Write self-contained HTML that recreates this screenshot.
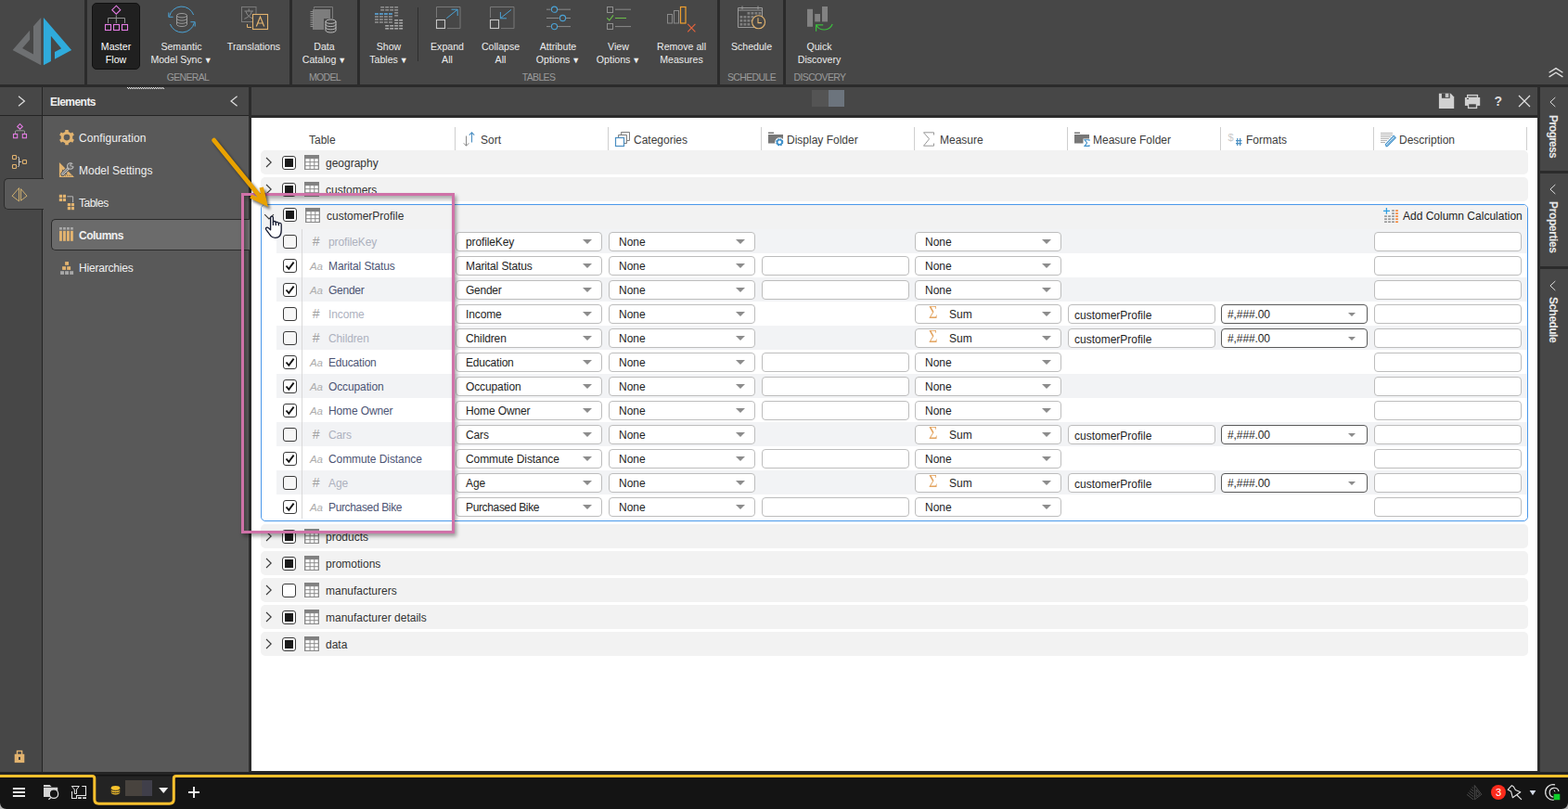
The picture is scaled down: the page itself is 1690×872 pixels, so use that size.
<!DOCTYPE html>
<html><head><meta charset="utf-8"><title>Columns</title>
<style>
*{box-sizing:border-box}
html,body{margin:0;padding:0}
body{width:1690px;height:872px;position:relative;overflow:hidden;background:#474747;font-family:"Liberation Sans",sans-serif;font-size:12px;color:#e6e6e6}
.a{position:absolute}
.d{position:absolute;background:#2b2b2b}
.rb{position:absolute;top:43px;text-align:center;font-size:10.6px;line-height:14px;color:#ededed;white-space:nowrap;transform:translateX(-50%)}
.gl{position:absolute;top:76px;font-size:10.5px;line-height:14px;color:#9b9b9b;white-space:nowrap;transform:translateX(-50%);letter-spacing:-0.65px}
.mi{position:absolute;left:85px;font-size:12px;line-height:16px;color:#f0f0f0;white-space:nowrap}
.row{position:absolute;left:281px;width:1366px;height:26px;background:#f2f2f2;border-radius:5px}
.rt{position:absolute;left:351px;font-size:12px;line-height:16px;color:#333;white-space:nowrap}
.cb{position:absolute;width:15px;height:15px;border:1px solid #3a3a3a;border-radius:3px;background:#fff}
.cb i{position:absolute;left:2px;top:2px;width:9px;height:9px;background:#1a1a1a}
.hd{position:absolute;top:143px;font-size:12px;line-height:16px;color:#3c3c3c;white-space:nowrap}
.hl{position:absolute;top:137px;width:1px;height:25px;background:#cfcfcf}
.dd{position:absolute;width:158px;height:21px;border:1px solid #bdbdbd;border-radius:4px;background:#fff;font-size:12px;line-height:20px;color:#1e1e1e;padding-left:10px;white-space:nowrap}
.dd:after{content:"";position:absolute;right:10.5px;top:7px;border-left:5px solid transparent;border-right:5px solid transparent;border-top:5px solid #8c8c8c}
.dd.fm:after{right:12px;top:8px;border-left-width:4px;border-right-width:4px;border-top-width:4px}
.tx{position:absolute;width:159px;height:21px;border:1px solid #bdbdbd;border-radius:4px;background:#fff;font-size:12px;line-height:22px;color:#1e1e1e;padding-left:6px;white-space:nowrap}
.sr{position:absolute;left:298px;width:1348px;height:26px}
.sn{position:absolute;left:354px;font-size:12px;line-height:16px;white-space:nowrap}
.ty{position:absolute;font-size:11px;line-height:16px;color:#a9a9a9;white-space:nowrap}
.vt{position:absolute;left:1658.5px;width:29px;font-weight:bold;font-size:12px;color:#e8e8e8;writing-mode:vertical-rl;white-space:nowrap;line-height:29px;letter-spacing:-0.7px}
</style></head><body>

<div class="a" style="left:0;top:0;width:1690px;height:91px;background:#474747"></div>
<div class="d" style="left:91px;top:0;width:3px;height:92px"></div>
<div class="d" style="left:312px;top:0;width:3px;height:92px"></div>
<div class="d" style="left:385px;top:0;width:3px;height:92px"></div>
<div class="d" style="left:773px;top:0;width:3px;height:92px"></div>
<div class="d" style="left:844px;top:0;width:3px;height:92px"></div>
<div class="d" style="left:0;top:91px;width:1690px;height:3px"></div>
<svg class="a" style="left:0;top:0" width="91" height="91" viewBox="0 0 91 91">
<polygon points="44.2,19 36,28.3 36,58.4 24.1,51.9 32.1,42.7 32.1,32.8 13.6,53.9 44.2,70.2" fill="#6e7072"/>
<polygon points="46.9,19 77.1,53.9 59,63.7 59,55.9 66.1,52.2 54.9,38.8 54.9,65.9 46.9,70.2" fill="#2fabdc"/>
</svg>
<div class="a" style="left:99px;top:3px;width:52px;height:72px;background:#202020;border:1px solid #111;border-radius:5px"></div>
<div class="rb" style="left:125px;color:#ffffff">Master<br>Flow</div>
<div class="rb" style="left:195.5px;color:#ededed">Semantic<br>Model Sync <span style="font-size:9px;position:relative;top:-0.5px;margin-left:-1px">&#9660;</span></div>
<div class="rb" style="left:273.5px;color:#ededed">Translations</div>
<div class="rb" style="left:349.5px;color:#ededed">Data<br>Catalog <span style="font-size:9px;position:relative;top:-0.5px;margin-left:-1px">&#9660;</span></div>
<div class="rb" style="left:419px;color:#ededed">Show<br>Tables <span style="font-size:9px;position:relative;top:-0.5px;margin-left:-1px">&#9660;</span></div>
<div class="rb" style="left:482px;color:#ededed">Expand<br>All</div>
<div class="rb" style="left:539.5px;color:#ededed">Collapse<br>All</div>
<div class="rb" style="left:601.5px;color:#ededed">Attribute<br>Options <span style="font-size:9px;position:relative;top:-0.5px;margin-left:-1px">&#9660;</span></div>
<div class="rb" style="left:666.5px;color:#ededed">View<br>Options <span style="font-size:9px;position:relative;top:-0.5px;margin-left:-1px">&#9660;</span></div>
<div class="rb" style="left:734.5px;color:#ededed">Remove all<br>Measures</div>
<div class="rb" style="left:810px;color:#ededed">Schedule</div>
<div class="rb" style="left:883px;color:#ededed">Quick<br>Discovery</div>
<div class="gl" style="left:202.5px">GENERAL</div>
<div class="gl" style="left:350px">MODEL</div>
<div class="gl" style="left:580.5px">TABLES</div>
<div class="gl" style="left:810px">SCHEDULE</div>
<div class="gl" style="left:883.5px">DISCOVERY</div>
<div class="a" style="left:450px;top:8px;width:1px;height:58px;background:#2e2e2e"></div>
<svg class="a" style="left:110px;top:4px" width="32" height="32" viewBox="0 0 32 32"><path d="M15.3 2.2 L19.8 6.7 L15.3 11.2 L10.8 6.7 Z" fill="none" stroke="#e27be2" stroke-width="1.1"/>
<path d="M15.3 12.4 V21 M6.5 21 V15.5 H24.5 V21" fill="none" stroke="#8f8f8f" stroke-width="1"/>
<rect x="3.5" y="22.5" width="6" height="6" fill="none" stroke="#e27be2" stroke-width="1.1"/>
<rect x="12.5" y="22.5" width="6" height="6" fill="none" stroke="#e27be2" stroke-width="1.1"/>
<rect x="21.5" y="22.5" width="6" height="6" fill="none" stroke="#e27be2" stroke-width="1.1"/></svg>
<svg class="a" style="left:180px;top:6px" width="32" height="30" viewBox="0 0 32 30"><g transform="translate(10,8)"><g fill="none" stroke="#9a9a9a" stroke-width="1"><ellipse cx="6" cy="2.7" rx="5.5" ry="2.2"/><path d="M0.5 2.7 V12.3 A5.5 2.2 0 0 0 11.5 12.3 V2.7"/><path d="M0.5 5.9 A5.5 2.2 0 0 0 11.5 5.9 M0.5 9.1 A5.5 2.2 0 0 0 11.5 9.1"/></g></g>
<path d="M2.6 11.5 A13.6 13.6 0 0 1 28.6 10" fill="none" stroke="#4ba3d6" stroke-width="1"/>
<path d="M29.4 18.5 A13.6 13.6 0 0 1 3.4 20" fill="none" stroke="#4ba3d6" stroke-width="1"/>
<path d="M1.8 7.5 V12.3 H6.6" fill="none" stroke="#4ba3d6" stroke-width="1"/>
<path d="M30.2 22.5 V17.7 H25.4" fill="none" stroke="#4ba3d6" stroke-width="1"/></svg>
<svg class="a" style="left:259px;top:6px" width="32" height="28" viewBox="0 0 32 28"><rect x="1.5" y="1.5" width="15.5" height="16" fill="none" stroke="#7b7b7b" stroke-width="1"/>
<path d="M4.5 6 H14 M9.2 3.3 V6 M12.4 6.2 C11.5 10.5 8 13 4.3 14.3 M6 6.2 C7 10.5 10.5 13 14.2 14.3" fill="none" stroke="#8a8a8a" stroke-width="1"/>
<path d="M7.5 20 V23.5 H12" fill="none" stroke="#e2b36f" stroke-width="1"/>
<rect x="13.5" y="9.5" width="16" height="16" fill="#474747" stroke="#e2b36f" stroke-width="1.1"/>
<path d="M17.3 22.5 L21.5 12 L25.7 22.5 M18.8 19 H24.2" fill="none" stroke="#e2b36f" stroke-width="1.2"/></svg>
<svg class="a" style="left:334px;top:6px" width="32" height="30" viewBox="0 0 32 30"><path d="M4.5 3.5 V1.5 H24.5 V17" fill="none" stroke="#7b7b7b" stroke-width="1"/>
<rect x="3" y="4" width="19" height="22" fill="#7d7d7d"/>
<path d="M0.5 6.5 H4 M0.5 8.5 H4 M0.5 10.5 H4 M0.5 12.5 H4 M0.5 14.5 H4 M0.5 16.5 H4 M0.5 18.5 H4 M0.5 20.5 H4 M0.5 22.5 H4" stroke="#8f8f8f" stroke-width="1" fill="none"/>
<rect x="15" y="14" width="15" height="16" fill="#474747"/>
<g transform="translate(16.5,14.5)"><g fill="none" stroke="#c2c2c2" stroke-width="1"><ellipse cx="6" cy="2.7" rx="5.5" ry="2.2"/><path d="M0.5 2.7 V12.3 A5.5 2.2 0 0 0 11.5 12.3 V2.7"/><path d="M0.5 5.9 A5.5 2.2 0 0 0 11.5 5.9 M0.5 9.1 A5.5 2.2 0 0 0 11.5 9.1"/></g></g></svg>
<svg class="a" style="left:404px;top:6px" width="32" height="28" viewBox="0 0 32 28"><rect x="6.2" y="1.0" width="3.9" height="1.6" fill="#8d8d8d"/><rect x="6.2" y="4.0" width="3.9" height="1.6" fill="#8d8d8d"/><rect x="11.2" y="1.0" width="3.9" height="1.6" fill="#8d8d8d"/><rect x="11.2" y="4.0" width="3.9" height="1.6" fill="#8d8d8d"/><rect x="16.2" y="1.0" width="3.9" height="1.6" fill="#8d8d8d"/><rect x="16.2" y="4.0" width="3.9" height="1.6" fill="#8d8d8d"/><rect x="21.2" y="1.0" width="3.9" height="1.6" fill="#8d8d8d"/><rect x="21.2" y="4.0" width="3.9" height="1.6" fill="#8d8d8d"/><rect x="21.2" y="7.0" width="3.9" height="1.6" fill="#8d8d8d"/><rect x="21.2" y="10.0" width="3.9" height="1.6" fill="#8d8d8d"/><rect x="0.0" y="11.2" width="3.9" height="1.6" fill="#8d8d8d"/><rect x="0.0" y="14.2" width="3.9" height="1.6" fill="#8d8d8d"/><rect x="0.0" y="17.2" width="3.9" height="1.6" fill="#8d8d8d"/><rect x="5.0" y="11.2" width="3.9" height="1.6" fill="#8d8d8d"/><rect x="5.0" y="14.2" width="3.9" height="1.6" fill="#8d8d8d"/><rect x="5.0" y="17.2" width="3.9" height="1.6" fill="#8d8d8d"/><rect x="10.0" y="11.2" width="3.9" height="1.6" fill="#8d8d8d"/><rect x="10.0" y="14.2" width="3.9" height="1.6" fill="#8d8d8d"/><rect x="10.0" y="17.2" width="3.9" height="1.6" fill="#8d8d8d"/><rect x="15.0" y="11.2" width="3.9" height="1.6" fill="#8d8d8d"/><rect x="15.0" y="14.2" width="3.9" height="1.6" fill="#8d8d8d"/><rect x="15.0" y="17.2" width="3.9" height="1.6" fill="#8d8d8d"/><rect x="0.0" y="8.2" width="3.9" height="1.6" fill="#5aa7dc"/><rect x="5.0" y="8.2" width="3.9" height="1.6" fill="#5aa7dc"/><rect x="10.0" y="8.2" width="3.9" height="1.6" fill="#5aa7dc"/><rect x="15.0" y="8.2" width="3.9" height="1.6" fill="#5aa7dc"/><rect x="21.2" y="15.0" width="3.9" height="1.6" fill="#a6a6a6"/><rect x="21.2" y="18.0" width="3.9" height="1.6" fill="#a6a6a6"/><rect x="26.2" y="15.0" width="3.9" height="1.6" fill="#a6a6a6"/><rect x="26.2" y="18.0" width="3.9" height="1.6" fill="#a6a6a6"/><rect x="11.2" y="21.0" width="3.9" height="1.6" fill="#a6a6a6"/><rect x="11.2" y="24.0" width="3.9" height="1.6" fill="#a6a6a6"/><rect x="16.2" y="21.0" width="3.9" height="1.6" fill="#a6a6a6"/><rect x="16.2" y="24.0" width="3.9" height="1.6" fill="#a6a6a6"/><rect x="21.2" y="21.0" width="3.9" height="1.6" fill="#a6a6a6"/><rect x="21.2" y="24.0" width="3.9" height="1.6" fill="#a6a6a6"/><rect x="26.2" y="21.0" width="3.9" height="1.6" fill="#a6a6a6"/><rect x="26.2" y="24.0" width="3.9" height="1.6" fill="#a6a6a6"/></svg>
<svg class="a" style="left:469px;top:6px" width="30" height="28" viewBox="0 0 30 28"><path d="M1.5 13 V1.5 H27 V24.6 H13" fill="none" stroke="#787878" stroke-width="1"/>
<rect x="1.5" y="15.5" width="9" height="9" fill="none" stroke="#c6c6c6" stroke-width="1.1"/>
<path d="M12.3 13.7 L24 4.4 M17.5 4.2 H24.2 V11" fill="none" stroke="#4ba3d6" stroke-width="1"/></svg>
<svg class="a" style="left:527px;top:6px" width="30" height="28" viewBox="0 0 30 28"><path d="M1.5 13 V1.5 H27 V24.6 H13" fill="none" stroke="#787878" stroke-width="1"/>
<rect x="1.5" y="15.5" width="9" height="9" fill="none" stroke="#c6c6c6" stroke-width="1.1"/>
<path d="M24 4.4 L12.6 13.6 M12.4 7 V13.8 H19" fill="none" stroke="#4ba3d6" stroke-width="1"/></svg>
<svg class="a" style="left:588px;top:5px" width="30" height="30" viewBox="0 0 30 30"><path d="M1 5.2 H5.5 M13 5.2 H27 M1 14.5 H14.5 M22 14.5 H27 M1 23.6 H5.5 M13 23.6 H27" stroke="#8a8a8a" stroke-width="1" fill="none"/>
<circle cx="9.5" cy="5.2" r="3.1" fill="none" stroke="#4ba3d6" stroke-width="1.1"/>
<circle cx="18.5" cy="14.5" r="3.1" fill="none" stroke="#4ba3d6" stroke-width="1.1"/>
<circle cx="9.5" cy="23.6" r="3.1" fill="none" stroke="#4ba3d6" stroke-width="1.1"/></svg>
<svg class="a" style="left:653px;top:5px" width="30" height="30" viewBox="0 0 30 30"><rect x="1.5" y="2.5" width="6" height="6" fill="none" stroke="#8f8f8f" stroke-width="1"/>
<rect x="1.5" y="20.5" width="6" height="6" fill="none" stroke="#8f8f8f" stroke-width="1"/>
<path d="M10 5.2 H27 M10 23.6 H27" stroke="#8a8a8a" stroke-width="1" fill="none"/>
<path d="M1.2 14.3 L3.8 17 L8 11.3 M10 14.5 H22" stroke="#6cc04a" stroke-width="1.1" fill="none"/></svg>
<svg class="a" style="left:718px;top:5px" width="34" height="32" viewBox="0 0 34 32"><rect x="1.5" y="10.5" width="5" height="9.5" fill="none" stroke="#8a8a8a" stroke-width="1"/>
<rect x="8.5" y="6.5" width="5" height="13.5" fill="none" stroke="#8a8a8a" stroke-width="1"/>
<rect x="15.5" y="2.5" width="5.5" height="17.5" fill="none" stroke="#f0a030" stroke-width="1.2"/>
<path d="M23.2 20.9 L31.4 29.3 M31.4 20.9 L23.2 29.3" stroke="#e8643c" stroke-width="1.1" fill="none"/></svg>
<svg class="a" style="left:794px;top:5px" width="34" height="30" viewBox="0 0 34 30"><path d="M1.5 3.5 H27.5 V24.5 H1.5 Z M1.5 6 H27.5 M6 1.5 V5 M23 1.5 V5" fill="none" stroke="#9a9a9a" stroke-width="1"/><rect x="11.5" y="8" width="2.8" height="2.6" fill="#7f7f7f"/><rect x="15.5" y="8" width="2.8" height="2.6" fill="#7f7f7f"/><rect x="19.5" y="8" width="2.8" height="2.6" fill="#7f7f7f"/><rect x="23.5" y="8" width="2.8" height="2.6" fill="#7f7f7f"/><rect x="3.5" y="12" width="2.8" height="2.6" fill="#7f7f7f"/><rect x="7.5" y="12" width="2.8" height="2.6" fill="#7f7f7f"/><rect x="11.5" y="12" width="2.8" height="2.6" fill="#7f7f7f"/><rect x="15.5" y="12" width="2.8" height="2.6" fill="#7f7f7f"/><rect x="19.5" y="12" width="2.8" height="2.6" fill="#7f7f7f"/><rect x="3.5" y="16" width="2.8" height="2.6" fill="#7f7f7f"/><rect x="7.5" y="16" width="2.8" height="2.6" fill="#7f7f7f"/><rect x="11.5" y="16" width="2.8" height="2.6" fill="#7f7f7f"/><rect x="15.5" y="16" width="2.8" height="2.6" fill="#7f7f7f"/><rect x="3.5" y="20" width="2.8" height="2.6" fill="#7f7f7f"/><rect x="7.5" y="20" width="2.8" height="2.6" fill="#7f7f7f"/><rect x="11.5" y="20" width="2.8" height="2.6" fill="#7f7f7f"/>
<circle cx="23.6" cy="18.8" r="7" fill="#474747" stroke="#e2b36f" stroke-width="1.1"/>
<path d="M23 14.2 V19.6 H27" fill="none" stroke="#e2b36f" stroke-width="1.1"/></svg>
<svg class="a" style="left:869px;top:5px" width="32" height="32" viewBox="0 0 32 32"><rect x="1" y="4.8" width="6" height="19" fill="#828282"/><rect x="9.2" y="10" width="5.8" height="8.4" fill="#828282"/><rect x="17" y="2" width="6" height="16.4" fill="#828282"/>
<path d="M28.2 21 C25 28.6 15 29 10.8 22.2 M10.6 28.8 V21.9 H18.2" fill="none" stroke="#3cbe3e" stroke-width="1.2"/></svg>
<svg class="a" style="left:1667.6px;top:71.7px" width="18" height="14" viewBox="0 0 18 14"><path d="M1.6 6.3 L9 1.6 L16.4 6.3 M1.6 10.9 L9 6.2 L16.4 10.9" fill="none" stroke="#e0e0e0" stroke-width="1.3"/></svg>
<div class="a" style="left:0;top:94px;width:1690px;height:30px;background:#474747"></div>
<div class="d" style="left:0;top:124px;width:271px;height:1px;background:#242424"></div>
<div class="d" style="left:268px;top:94px;width:3px;height:740px"></div>
<div class="d" style="left:268px;top:124px;width:1392px;height:3px"></div>
<div class="d" style="left:1657px;top:94px;width:3px;height:740px"></div>
<div class="d" style="left:45px;top:94px;width:1px;height:740px;background:#242424"></div>
<div class="a" style="left:137px;top:94px;width:39px;height:1px;background:repeating-linear-gradient(90deg,#f0f0f0 0 1px,#474747 1px 2px)"></div>
<div class="a" style="left:138px;top:95px;width:39px;height:1px;background:repeating-linear-gradient(90deg,#f0f0f0 0 1px,#474747 1px 2px)"></div>
<svg class="a" style="left:17px;top:101px" width="12" height="16" viewBox="0 0 12 16"><path d="M3 2.7 L9.4 8 L3 13.3" fill="none" stroke="#e0e0e0" stroke-width="1.2"/></svg>
<div class="a" style="left:54px;top:102px;font-weight:bold;font-size:12px;line-height:16px;color:#f0f0f0;letter-spacing:-0.55px">Elements</div>
<svg class="a" style="left:246px;top:101px" width="12" height="16" viewBox="0 0 12 16"><path d="M9.6 2.7 L3 8 L9.6 13.3" fill="none" stroke="#e0e0e0" stroke-width="1.2"/></svg>
<div class="a" style="left:875px;top:97px;width:18px;height:18px;background:#545454"></div>
<div class="a" style="left:893px;top:97px;width:17px;height:18px;background:#6c747d"></div>
<svg class="a" style="left:1550px;top:100px" width="18" height="18" viewBox="0 0 18 18"><path d="M0.9 0.8 H13.6 L17.2 4.5 V17.1 H0.9 Z" fill="#d1d1d1"/><rect x="3.9" y="0.8" width="8.8" height="5" fill="#474747"/><rect x="7.8" y="0.8" width="3.5" height="4.1" fill="#d1d1d1"/><rect x="9.3" y="1.2" width="0.5" height="3.4" fill="#9a9a9a"/></svg>
<svg class="a" style="left:1578px;top:101px" width="18" height="17" viewBox="0 0 18 17"><rect x="0.9" y="4" width="16.3" height="8.9" fill="#d1d1d1"/><rect x="3" y="0.9" width="12.1" height="3.4" fill="#d1d1d1"/><rect x="4.3" y="2.3" width="9.5" height="1.4" fill="#474747"/><rect x="3.9" y="10.1" width="10.3" height="6" fill="#d1d1d1"/><rect x="5.2" y="11.3" width="7.6" height="3.4" fill="#474747"/><rect x="2.9" y="4.9" width="2.1" height="1.1" fill="#474747"/></svg>
<div class="a" style="left:1610.5px;top:100px;font-weight:bold;font-size:14px;line-height:18px;color:#dcdcdc">?</div>
<svg class="a" style="left:1636px;top:102px" width="14" height="14" viewBox="0 0 14 14"><path d="M1 1 L13 13 M13 1 L1 13" stroke="#e2e2e2" stroke-width="1.2" fill="none"/></svg>
<div class="a" style="left:46px;top:125px;width:222px;height:709px;background:#595959"></div>
<div class="a" style="left:4px;top:192px;width:43px;height:34px;background:#595959;border:1px solid #2b2b2b;border-right:none;border-radius:5px 0 0 5px"></div>
<div class="a" style="left:55px;top:236px;width:214px;height:34px;background:#6b6b6b;border:1px solid #2b2b2b;border-right:none;border-radius:5px 0 0 5px"></div>
<div class="mi" style="top:140.5px;letter-spacing:0.08px;">Configuration</div>
<div class="mi" style="top:175.5px;">Model Settings</div>
<div class="mi" style="top:210.5px;letter-spacing:-0.5px;">Tables</div>
<div class="mi" style="top:245.5px;font-weight:bold;letter-spacing:-0.5px;">Columns</div>
<div class="mi" style="top:280.5px;letter-spacing:-0.2px;">Hierarchies</div>
<svg class="a" style="left:13px;top:132px" width="18" height="18" viewBox="0 0 18 18"><path d="M8.5 1.6 L11.3 4.4 L8.5 7.2 L5.7 4.4 Z" fill="none" stroke="#e27be2" stroke-width="1.1"/>
<path d="M3.5 12 V9.8 Q3.5 8.8 4.5 8.8 H12.5 Q13.5 8.8 13.5 9.8 V12" fill="none" stroke="#9a9a9a" stroke-width="1"/>
<rect x="1.5" y="12.5" width="4.2" height="4.2" fill="none" stroke="#e27be2" stroke-width="1.1"/>
<rect x="11.3" y="12.5" width="4.2" height="4.2" fill="none" stroke="#e27be2" stroke-width="1.1"/></svg>
<svg class="a" style="left:12px;top:166px" width="18" height="18" viewBox="0 0 18 18"><rect x="1.5" y="1.5" width="4" height="4" rx="0.8" fill="none" stroke="#e2b36f" stroke-width="1.1"/>
<rect x="1.5" y="11.5" width="4" height="4" rx="0.8" fill="none" stroke="#e2b36f" stroke-width="1.1"/>
<rect x="12.5" y="6.5" width="4" height="4" rx="0.8" fill="none" stroke="#e2b36f" stroke-width="1.1"/>
<path d="M7 3.4 H7.6 Q8.5 3.4 8.5 4.3 V12.6 Q8.5 13.5 7.6 13.5 H7 M8.5 8.4 H11.2" fill="none" stroke="#cfcfcf" stroke-width="1"/></svg>
<svg class="a" style="left:12px;top:201px" width="18" height="18" viewBox="0 0 18 18"><path d="M8.5 1.6 L1.1 10.2 L8.5 15.9 Z" fill="none" stroke="#d8b570" stroke-width="0.9" stroke-linejoin="round"/><path d="M10.5 2.6 L17 10.2 L10.5 15.2 Z" fill="none" stroke="#d8b570" stroke-width="0.9" stroke-linejoin="round"/></svg>
<svg class="a" style="left:15px;top:808px" width="12" height="15" viewBox="0 0 12 15"><rect x="3.5" y="1.5" width="5.1" height="6" fill="none" stroke="#e2b36f" stroke-width="1.4"/><rect x="0.7" y="4.8" width="10.6" height="9.3" fill="#e2b36f"/><rect x="5" y="7.9" width="1.9" height="3.1" fill="#3a3a3a"/></svg>
<svg class="a" style="left:63px;top:139px" width="18" height="18" viewBox="0 0 18 18"><polygon points="7.27,0.98 10.73,0.98 10.85,2.97 13.38,4.43 15.17,3.55 16.89,6.54 15.23,7.64 15.23,10.56 16.89,11.66 15.17,14.65 13.38,13.77 10.85,15.23 10.73,17.22 7.27,17.22 7.15,15.23 4.62,13.77 2.83,14.65 1.11,11.66 2.77,10.56 2.77,7.64 1.11,6.54 2.83,3.55 4.62,4.43 7.15,2.97" fill="#e2b36f"/><circle cx="9" cy="9.1" r="3.3" fill="#595959"/></svg>
<svg class="a" style="left:63px;top:174px" width="18" height="18" viewBox="0 0 18 18"><path d="M0.9 0.9 V17 H17 Z M4 8.4 V14 H9.8 Z" fill="#e2b36f" fill-rule="evenodd"/><rect x="3.4" y="14.6" width="0.8" height="1.3" fill="#595959"/><rect x="5.3" y="14.6" width="0.8" height="1.3" fill="#595959"/><rect x="7.2" y="14.6" width="0.8" height="1.3" fill="#595959"/><rect x="9.1" y="14.6" width="0.8" height="1.3" fill="#595959"/><rect x="11.0" y="14.6" width="0.8" height="1.3" fill="#595959"/><rect x="12.9" y="14.6" width="0.8" height="1.3" fill="#595959"/>
<path d="M4.4 13.6 L11.6 6.4" stroke="#595959" stroke-width="4.4" fill="none" stroke-linecap="round"/>
<path d="M4.6 13.4 L11 7" stroke="#bdbdbd" stroke-width="2.8" fill="none" stroke-linecap="round"/>
<path d="M4.8 13.2 L11 7" stroke="#666" stroke-width="1" fill="none" stroke-linecap="round"/>
<circle cx="12.8" cy="5" r="3.2" fill="#666" stroke="#bdbdbd" stroke-width="1.1"/>
<path d="M12.8 5 L17.6 0.4 L18 5.6 Z" fill="#595959"/>
<path d="M13.4 1.8 L12.8 4.8 L15.8 5.4" fill="none" stroke="#bdbdbd" stroke-width="1"/></svg>
<svg class="a" style="left:63px;top:209px" width="18" height="18" viewBox="0 0 18 18"><rect x="0.8" y="0.8" width="3.2" height="3.2" fill="#e2b36f"/><rect x="4.8" y="0.8" width="3.2" height="3.2" fill="#e2b36f"/><rect x="0.8" y="4.8" width="3.2" height="3.2" fill="#e2b36f"/><rect x="4.8" y="4.8" width="3.2" height="3.2" fill="#e2b36f"/><rect x="9.8" y="10" width="3.2" height="3.2" fill="#e2b36f"/><rect x="13.8" y="10" width="3.2" height="3.2" fill="#e2b36f"/><rect x="9.8" y="14" width="3.2" height="3.2" fill="#e2b36f"/><rect x="13.8" y="14" width="3.2" height="3.2" fill="#e2b36f"/><path d="M9.4 2.8 H15.6 V9.2" fill="none" stroke="#b5b5b5" stroke-width="1"/></svg>
<svg class="a" style="left:63px;top:244px" width="18" height="18" viewBox="0 0 18 18"><rect x="1" y="1" width="2.9" height="2.6" fill="#a9a9a9"/><rect x="1" y="4.8" width="2.9" height="11" fill="#e2b36f"/><rect x="5" y="1" width="2.9" height="2.6" fill="#a9a9a9"/><rect x="5" y="4.8" width="2.9" height="11" fill="#e2b36f"/><rect x="9" y="1" width="2.9" height="2.6" fill="#a9a9a9"/><rect x="9" y="4.8" width="2.9" height="11" fill="#e2b36f"/><rect x="13" y="1" width="2.9" height="2.6" fill="#a9a9a9"/><rect x="13" y="4.8" width="2.9" height="11" fill="#e2b36f"/></svg>
<svg class="a" style="left:63px;top:280px" width="18" height="18" viewBox="0 0 18 18"><rect x="7.1" y="2.1" width="3.9" height="3.7" fill="#e2b36f"/><rect x="4.1" y="7.2" width="3.9" height="3.7" fill="#e2b36f"/><rect x="9.2" y="7.2" width="3.9" height="3.7" fill="#e2b36f"/><rect x="2.1" y="12.2" width="3.9" height="3.7" fill="#a9a9a9"/><rect x="7.1" y="12.2" width="3.9" height="3.7" fill="#a9a9a9"/><rect x="12.2" y="12.2" width="3.9" height="3.7" fill="#a9a9a9"/></svg>
<div class="a" style="left:271px;top:127px;width:1386px;height:704px;background:#fff"></div>
<div class="d" style="left:271px;top:831px;width:1390px;height:1px"></div>
<div class="hd" style="left:333px">Table</div>
<div class="hd" style="left:518px">Sort</div>
<div class="hd" style="left:683px">Categories</div>
<div class="hd" style="left:848px">Display Folder</div>
<div class="hd" style="left:1013px">Measure</div>
<div class="hd" style="left:1178px">Measure Folder</div>
<div class="hd" style="left:1343px">Formats</div>
<div class="hd" style="left:1508px">Description</div>
<div class="hl" style="left:490px"></div>
<div class="hl" style="left:655px"></div>
<div class="hl" style="left:820px"></div>
<div class="hl" style="left:985px"></div>
<div class="hl" style="left:1150px"></div>
<div class="hl" style="left:1315px"></div>
<div class="hl" style="left:1480px"></div>
<div class="hl" style="left:1645px"></div>
<svg class="a" style="left:498px;top:140px" width="16" height="20" viewBox="0 0 16 20">
<path d="M4.5 6.5 V17 M1.8 14.3 L4.5 17.3 L7.2 14.3" fill="none" stroke="#8a8a8a" stroke-width="1"/>
<path d="M10.5 13.5 V3 M7.8 5.7 L10.5 2.7 L13.2 5.7" fill="none" stroke="#4a8ec2" stroke-width="1.1"/></svg>
<svg class="a" style="left:662px;top:141px" width="18" height="18" viewBox="0 0 18 18">
<path d="M7.5 4.5 V1.5 H16.5 V10.5 H13.5" fill="none" stroke="#7d7d7d" stroke-width="1"/>
<path d="M4.5 7.5 V4.5 H13.5 V13.5 H10.5" fill="none" stroke="#7d7d7d" stroke-width="1"/>
<rect x="1.5" y="7.5" width="9" height="9" fill="#fff" stroke="#4a8ec2" stroke-width="1.2"/></svg>
<svg class="a" style="left:828px;top:142px" width="18" height="17" viewBox="0 0 18 17"><path d="M0 0.5 H6 V2 H0 Z M0 3 H16 V12.5 H0 Z" fill="#777"/>
<circle cx="12.2" cy="11.2" r="5" fill="#fff"/>
<circle cx="12.2" cy="11.2" r="3" fill="none" stroke="#3d8fc9" stroke-width="2.2" stroke-dasharray="1.6 0.76"/>
<circle cx="12.2" cy="11.2" r="2.6" fill="none" stroke="#3d8fc9" stroke-width="1.4"/></svg>
<svg class="a" style="left:994px;top:142px" width="14" height="16" viewBox="0 0 14 16"><path d="M12.5 3.5 V0.8 H1.5 L7.5 7.8 L1.5 15.2 H12.5 V12.5" fill="none" stroke="#8c8c8c" stroke-width="0.9"/></svg>
<svg class="a" style="left:1158px;top:142px" width="18" height="17" viewBox="0 0 18 17"><path d="M0 0.5 H6 V2 H0 Z M0 3 H16 V12.5 H0 Z" fill="#777"/>
<rect x="9.5" y="7.5" width="8.5" height="9.5" fill="#fff"/>
<path d="M16 10 V8.8 H11 L13.6 12 L11 15.4 H16 V14.2" fill="none" stroke="#3d8fc9" stroke-width="1.1"/></svg>
<div class="a" style="left:1323.6px;top:140.5px;font-size:11px;line-height:14px;color:#c9c9c9">$</div>
<svg class="a" style="left:1331px;top:148px" width="9" height="10" viewBox="0 0 9 10"><path d="M2.8 1 V9 M5.6 1 V9 M1 3.6 H7.4 M1 6.6 H7.4" stroke="#4a8fc2" stroke-width="1.2" fill="none"/></svg>
<svg class="a" style="left:1488px;top:142px" width="18" height="17" viewBox="0 0 18 17">
<path d="M0 1.5 H13 M0 3.5 H13 M0 5.5 H11 M0 7.5 H9 M0 9.5 H7 M0 11.5 H5" stroke="#a0a0a0" stroke-width="0.8" fill="none"/>
<path d="M6.2 15.8 L5.4 13.6 L14.2 4.4 L16.2 6.4 L7.6 15.2 Z" fill="#fff" stroke="#3d8fc9" stroke-width="1.1"/>
<path d="M6.6 14.6 L14.8 6" stroke="#3d8fc9" stroke-width="0.8"/></svg>
<div class="row" style="top:162px"></div>
<svg class="a" style="left:284px;top:168px" width="10" height="14" viewBox="0 0 10 14"><path d="M3 2 L8.2 7 L3 12" fill="none" stroke="#3a3a3a" stroke-width="1.1"/></svg>
<div class="cb" style="left:304px;top:168px"><i></i></div>
<svg class="a" style="left:328px;top:167px" width="16" height="16" viewBox="0 0 16 16"><rect x="0" y="0" width="16" height="16" fill="#8b8b8b"/><rect x="0" y="0" width="16" height="3.4" fill="#818181"/><rect x="1.4" y="4.2" width="4.2" height="3" fill="#fff"/><rect x="1.4" y="8.2" width="4.2" height="3" fill="#fff"/><rect x="1.4" y="12.2" width="4.2" height="2.7" fill="#fff"/><rect x="6.6" y="4.2" width="3.7" height="3" fill="#fff"/><rect x="6.6" y="8.2" width="3.7" height="3" fill="#fff"/><rect x="6.6" y="12.2" width="3.7" height="2.7" fill="#fff"/><rect x="11.3" y="4.2" width="3.4" height="3" fill="#fff"/><rect x="11.3" y="8.2" width="3.4" height="3" fill="#fff"/><rect x="11.3" y="12.2" width="3.4" height="2.7" fill="#fff"/></svg>
<div class="rt" style="top:168px">geography</div>
<div class="row" style="top:191px"></div>
<svg class="a" style="left:284px;top:197px" width="10" height="14" viewBox="0 0 10 14"><path d="M3 2 L8.2 7 L3 12" fill="none" stroke="#3a3a3a" stroke-width="1.1"/></svg>
<div class="cb" style="left:304px;top:197px"><i></i></div>
<svg class="a" style="left:328px;top:196px" width="16" height="16" viewBox="0 0 16 16"><rect x="0" y="0" width="16" height="16" fill="#8b8b8b"/><rect x="0" y="0" width="16" height="3.4" fill="#818181"/><rect x="1.4" y="4.2" width="4.2" height="3" fill="#fff"/><rect x="1.4" y="8.2" width="4.2" height="3" fill="#fff"/><rect x="1.4" y="12.2" width="4.2" height="2.7" fill="#fff"/><rect x="6.6" y="4.2" width="3.7" height="3" fill="#fff"/><rect x="6.6" y="8.2" width="3.7" height="3" fill="#fff"/><rect x="6.6" y="12.2" width="3.7" height="2.7" fill="#fff"/><rect x="11.3" y="4.2" width="3.4" height="3" fill="#fff"/><rect x="11.3" y="8.2" width="3.4" height="3" fill="#fff"/><rect x="11.3" y="12.2" width="3.4" height="2.7" fill="#fff"/></svg>
<div class="rt" style="top:197px">customers</div>
<div class="row" style="top:565px"></div>
<svg class="a" style="left:284px;top:571px" width="10" height="14" viewBox="0 0 10 14"><path d="M3 2 L8.2 7 L3 12" fill="none" stroke="#3a3a3a" stroke-width="1.1"/></svg>
<div class="cb" style="left:304px;top:571px"><i></i></div>
<svg class="a" style="left:328px;top:570px" width="16" height="16" viewBox="0 0 16 16"><rect x="0" y="0" width="16" height="16" fill="#8b8b8b"/><rect x="0" y="0" width="16" height="3.4" fill="#818181"/><rect x="1.4" y="4.2" width="4.2" height="3" fill="#fff"/><rect x="1.4" y="8.2" width="4.2" height="3" fill="#fff"/><rect x="1.4" y="12.2" width="4.2" height="2.7" fill="#fff"/><rect x="6.6" y="4.2" width="3.7" height="3" fill="#fff"/><rect x="6.6" y="8.2" width="3.7" height="3" fill="#fff"/><rect x="6.6" y="12.2" width="3.7" height="2.7" fill="#fff"/><rect x="11.3" y="4.2" width="3.4" height="3" fill="#fff"/><rect x="11.3" y="8.2" width="3.4" height="3" fill="#fff"/><rect x="11.3" y="12.2" width="3.4" height="2.7" fill="#fff"/></svg>
<div class="rt" style="top:571px">products</div>
<div class="row" style="top:594px"></div>
<svg class="a" style="left:284px;top:600px" width="10" height="14" viewBox="0 0 10 14"><path d="M3 2 L8.2 7 L3 12" fill="none" stroke="#3a3a3a" stroke-width="1.1"/></svg>
<div class="cb" style="left:304px;top:600px"><i></i></div>
<svg class="a" style="left:328px;top:599px" width="16" height="16" viewBox="0 0 16 16"><rect x="0" y="0" width="16" height="16" fill="#8b8b8b"/><rect x="0" y="0" width="16" height="3.4" fill="#818181"/><rect x="1.4" y="4.2" width="4.2" height="3" fill="#fff"/><rect x="1.4" y="8.2" width="4.2" height="3" fill="#fff"/><rect x="1.4" y="12.2" width="4.2" height="2.7" fill="#fff"/><rect x="6.6" y="4.2" width="3.7" height="3" fill="#fff"/><rect x="6.6" y="8.2" width="3.7" height="3" fill="#fff"/><rect x="6.6" y="12.2" width="3.7" height="2.7" fill="#fff"/><rect x="11.3" y="4.2" width="3.4" height="3" fill="#fff"/><rect x="11.3" y="8.2" width="3.4" height="3" fill="#fff"/><rect x="11.3" y="12.2" width="3.4" height="2.7" fill="#fff"/></svg>
<div class="rt" style="top:600px">promotions</div>
<div class="row" style="top:623px"></div>
<svg class="a" style="left:284px;top:629px" width="10" height="14" viewBox="0 0 10 14"><path d="M3 2 L8.2 7 L3 12" fill="none" stroke="#3a3a3a" stroke-width="1.1"/></svg>
<div class="cb" style="left:304px;top:629px"></div>
<svg class="a" style="left:328px;top:628px" width="16" height="16" viewBox="0 0 16 16"><rect x="0" y="0" width="16" height="16" fill="#8b8b8b"/><rect x="0" y="0" width="16" height="3.4" fill="#818181"/><rect x="1.4" y="4.2" width="4.2" height="3" fill="#fff"/><rect x="1.4" y="8.2" width="4.2" height="3" fill="#fff"/><rect x="1.4" y="12.2" width="4.2" height="2.7" fill="#fff"/><rect x="6.6" y="4.2" width="3.7" height="3" fill="#fff"/><rect x="6.6" y="8.2" width="3.7" height="3" fill="#fff"/><rect x="6.6" y="12.2" width="3.7" height="2.7" fill="#fff"/><rect x="11.3" y="4.2" width="3.4" height="3" fill="#fff"/><rect x="11.3" y="8.2" width="3.4" height="3" fill="#fff"/><rect x="11.3" y="12.2" width="3.4" height="2.7" fill="#fff"/></svg>
<div class="rt" style="top:629px">manufacturers</div>
<div class="row" style="top:652px"></div>
<svg class="a" style="left:284px;top:658px" width="10" height="14" viewBox="0 0 10 14"><path d="M3 2 L8.2 7 L3 12" fill="none" stroke="#3a3a3a" stroke-width="1.1"/></svg>
<div class="cb" style="left:304px;top:658px"><i></i></div>
<svg class="a" style="left:328px;top:657px" width="16" height="16" viewBox="0 0 16 16"><rect x="0" y="0" width="16" height="16" fill="#8b8b8b"/><rect x="0" y="0" width="16" height="3.4" fill="#818181"/><rect x="1.4" y="4.2" width="4.2" height="3" fill="#fff"/><rect x="1.4" y="8.2" width="4.2" height="3" fill="#fff"/><rect x="1.4" y="12.2" width="4.2" height="2.7" fill="#fff"/><rect x="6.6" y="4.2" width="3.7" height="3" fill="#fff"/><rect x="6.6" y="8.2" width="3.7" height="3" fill="#fff"/><rect x="6.6" y="12.2" width="3.7" height="2.7" fill="#fff"/><rect x="11.3" y="4.2" width="3.4" height="3" fill="#fff"/><rect x="11.3" y="8.2" width="3.4" height="3" fill="#fff"/><rect x="11.3" y="12.2" width="3.4" height="2.7" fill="#fff"/></svg>
<div class="rt" style="top:658px">manufacturer details</div>
<div class="row" style="top:681px"></div>
<svg class="a" style="left:284px;top:687px" width="10" height="14" viewBox="0 0 10 14"><path d="M3 2 L8.2 7 L3 12" fill="none" stroke="#3a3a3a" stroke-width="1.1"/></svg>
<div class="cb" style="left:304px;top:687px"><i></i></div>
<svg class="a" style="left:328px;top:686px" width="16" height="16" viewBox="0 0 16 16"><rect x="0" y="0" width="16" height="16" fill="#8b8b8b"/><rect x="0" y="0" width="16" height="3.4" fill="#818181"/><rect x="1.4" y="4.2" width="4.2" height="3" fill="#fff"/><rect x="1.4" y="8.2" width="4.2" height="3" fill="#fff"/><rect x="1.4" y="12.2" width="4.2" height="2.7" fill="#fff"/><rect x="6.6" y="4.2" width="3.7" height="3" fill="#fff"/><rect x="6.6" y="8.2" width="3.7" height="3" fill="#fff"/><rect x="6.6" y="12.2" width="3.7" height="2.7" fill="#fff"/><rect x="11.3" y="4.2" width="3.4" height="3" fill="#fff"/><rect x="11.3" y="8.2" width="3.4" height="3" fill="#fff"/><rect x="11.3" y="12.2" width="3.4" height="2.7" fill="#fff"/></svg>
<div class="rt" style="top:687px">data</div>
<div class="a" style="left:281px;top:220px;width:1366px;height:342px;border:1px solid #4a98ea;border-radius:5px;background:#fff"></div>
<div class="a" style="left:282px;top:221px;width:1364px;height:26px;background:#f2f2f2;border-radius:4px 4px 0 0"></div>
<svg class="a" style="left:284px;top:226px" width="14" height="12" viewBox="0 0 14 12"><path d="M1.2 5.2 L6 10 L11 5.2" fill="none" stroke="#3a3a3a" stroke-width="1.1"/></svg>
<div class="cb" style="left:305px;top:224px"><i></i></div>
<svg class="a" style="left:329px;top:224px" width="16" height="16" viewBox="0 0 16 16"><rect x="0" y="0" width="16" height="16" fill="#8b8b8b"/><rect x="0" y="0" width="16" height="3.4" fill="#818181"/><rect x="1.4" y="4.2" width="4.2" height="3" fill="#fff"/><rect x="1.4" y="8.2" width="4.2" height="3" fill="#fff"/><rect x="1.4" y="12.2" width="4.2" height="2.7" fill="#fff"/><rect x="6.6" y="4.2" width="3.7" height="3" fill="#fff"/><rect x="6.6" y="8.2" width="3.7" height="3" fill="#fff"/><rect x="6.6" y="12.2" width="3.7" height="2.7" fill="#fff"/><rect x="11.3" y="4.2" width="3.4" height="3" fill="#fff"/><rect x="11.3" y="8.2" width="3.4" height="3" fill="#fff"/><rect x="11.3" y="12.2" width="3.4" height="2.7" fill="#fff"/></svg>
<div class="rt" style="left:352px;top:225px">customerProfile</div>
<div class="a" style="left:1512px;top:225px;font-size:12px;line-height:16px;color:#222;white-space:nowrap">Add Column Calculation</div>
<svg class="a" style="left:1490px;top:224px" width="18" height="18" viewBox="0 0 18 18"><rect x="2.1" y="8.36" width="2.8" height="1.5" fill="#8c8c8c"/><rect x="2.1" y="11.39" width="2.8" height="1.5" fill="#8c8c8c"/><rect x="2.1" y="14.42" width="2.8" height="1.5" fill="#8c8c8c"/><rect x="6.1" y="8.36" width="2.8" height="1.5" fill="#8c8c8c"/><rect x="6.1" y="11.39" width="2.8" height="1.5" fill="#8c8c8c"/><rect x="6.1" y="14.42" width="2.8" height="1.5" fill="#8c8c8c"/><rect x="10.1" y="2.30" width="2.8" height="1.5" fill="#8c8c8c"/><rect x="10.1" y="5.33" width="2.8" height="1.5" fill="#8c8c8c"/><rect x="10.1" y="8.36" width="2.8" height="1.5" fill="#8c8c8c"/><rect x="10.1" y="11.39" width="2.8" height="1.5" fill="#8c8c8c"/><rect x="10.1" y="14.42" width="2.8" height="1.5" fill="#8c8c8c"/><rect x="14.1" y="2.30" width="2.8" height="1.5" fill="#f87a22"/><rect x="14.1" y="5.33" width="2.8" height="1.5" fill="#f87a22"/><rect x="14.1" y="8.36" width="2.8" height="1.5" fill="#f87a22"/><rect x="14.1" y="11.39" width="2.8" height="1.5" fill="#f87a22"/><rect x="14.1" y="14.42" width="2.8" height="1.5" fill="#f87a22"/><path d="M4.4 0 V6.8 M1 3.4 H8" stroke="#2e9fe2" stroke-width="1.3" fill="none"/></svg>
<div class="sr" style="top:247px;background:#f2f3f5;height:26px"></div>
<div class="cb" style="left:305px;top:253px;background:#f6f6f6"></div>
<div class="ty" style="left:336.8px;top:251.5px;font-size:14px;color:#a2a2a2">#</div>
<div class="sn" style="top:253px;color:#adb1be;letter-spacing:-0.12px">profileKey</div>
<div class="dd" style="left:491px;top:250px;letter-spacing:-0.12px">profileKey</div>
<div class="dd" style="left:656px;top:250px">None</div>
<div class="dd" style="left:986px;top:250px">None</div>
<div class="tx" style="left:1481px;top:250px"></div>
<div class="sr" style="top:273px;background:#ffffff;height:26px"></div>
<div class="cb" style="left:305px;top:279px"><svg class="a" style="left:1px;top:1px" width="11" height="11" viewBox="0 0 11 11"><path d="M1.5 5.5 L4.3 8.8 L9.6 1.6" fill="none" stroke="#111" stroke-width="1.9"/></svg></div>
<div class="ty" style="left:334px;top:278.5px;font-style:italic;font-size:11.5px;letter-spacing:-0.2px;color:#adadad">Aa</div>
<div class="sn" style="top:279px;color:#4c5474;letter-spacing:-0.12px">Marital Status</div>
<div class="dd" style="left:491px;top:276px;letter-spacing:-0.12px">Marital Status</div>
<div class="dd" style="left:656px;top:276px">None</div>
<div class="tx" style="left:821px;top:276px"></div>
<div class="dd" style="left:986px;top:276px">None</div>
<div class="tx" style="left:1481px;top:276px"></div>
<div class="sr" style="top:299px;background:#f2f3f5;height:26px"></div>
<div class="cb" style="left:305px;top:305px"><svg class="a" style="left:1px;top:1px" width="11" height="11" viewBox="0 0 11 11"><path d="M1.5 5.5 L4.3 8.8 L9.6 1.6" fill="none" stroke="#111" stroke-width="1.9"/></svg></div>
<div class="ty" style="left:334px;top:304.5px;font-style:italic;font-size:11.5px;letter-spacing:-0.2px;color:#adadad">Aa</div>
<div class="sn" style="top:305px;color:#4c5474;letter-spacing:-0.25px">Gender</div>
<div class="dd" style="left:491px;top:302px;letter-spacing:-0.25px">Gender</div>
<div class="dd" style="left:656px;top:302px">None</div>
<div class="tx" style="left:821px;top:302px"></div>
<div class="dd" style="left:986px;top:302px">None</div>
<div class="tx" style="left:1481px;top:302px"></div>
<div class="sr" style="top:325px;background:#ffffff;height:26px"></div>
<div class="cb" style="left:305px;top:331px;background:#f6f6f6"></div>
<div class="ty" style="left:336.8px;top:329.5px;font-size:14px;color:#a2a2a2">#</div>
<div class="sn" style="top:331px;color:#adb1be;letter-spacing:-0.12px">Income</div>
<div class="dd" style="left:491px;top:328px;letter-spacing:-0.12px">Income</div>
<div class="dd" style="left:656px;top:328px">None</div>
<div class="dd" style="left:986px;top:328px;padding-left:36px"><span class="a" style="left:13.8px;top:-2.9px;color:#e3a562;font-size:18px;line-height:22px;transform:scaleX(0.9);transform-origin:0 0;font-family:'Liberation Serif',serif">&#931;</span>Sum</div>
<div class="tx" style="left:1151px;top:328px">customerProfile</div>
<div class="dd fm" style="left:1316px;top:328px;padding-left:6px;border-color:#5a5a5a;letter-spacing:-0.1px">#,###.00</div>
<div class="tx" style="left:1481px;top:328px"></div>
<div class="sr" style="top:351px;background:#f2f3f5;height:26px"></div>
<div class="cb" style="left:305px;top:357px;background:#f6f6f6"></div>
<div class="ty" style="left:336.8px;top:355.5px;font-size:14px;color:#a2a2a2">#</div>
<div class="sn" style="top:357px;color:#adb1be;letter-spacing:-0.12px">Children</div>
<div class="dd" style="left:491px;top:354px;letter-spacing:-0.12px">Children</div>
<div class="dd" style="left:656px;top:354px">None</div>
<div class="dd" style="left:986px;top:354px;padding-left:36px"><span class="a" style="left:13.8px;top:-2.9px;color:#e3a562;font-size:18px;line-height:22px;transform:scaleX(0.9);transform-origin:0 0;font-family:'Liberation Serif',serif">&#931;</span>Sum</div>
<div class="tx" style="left:1151px;top:354px">customerProfile</div>
<div class="dd fm" style="left:1316px;top:354px;padding-left:6px;border-color:#5a5a5a;letter-spacing:-0.1px">#,###.00</div>
<div class="tx" style="left:1481px;top:354px"></div>
<div class="sr" style="top:377px;background:#ffffff;height:26px"></div>
<div class="cb" style="left:305px;top:383px"><svg class="a" style="left:1px;top:1px" width="11" height="11" viewBox="0 0 11 11"><path d="M1.5 5.5 L4.3 8.8 L9.6 1.6" fill="none" stroke="#111" stroke-width="1.9"/></svg></div>
<div class="ty" style="left:334px;top:382.5px;font-style:italic;font-size:11.5px;letter-spacing:-0.2px;color:#adadad">Aa</div>
<div class="sn" style="top:383px;color:#4c5474;letter-spacing:-0.2px">Education</div>
<div class="dd" style="left:491px;top:380px;letter-spacing:-0.2px">Education</div>
<div class="dd" style="left:656px;top:380px">None</div>
<div class="tx" style="left:821px;top:380px"></div>
<div class="dd" style="left:986px;top:380px">None</div>
<div class="tx" style="left:1481px;top:380px"></div>
<div class="sr" style="top:403px;background:#f2f3f5;height:26px"></div>
<div class="cb" style="left:305px;top:409px"><svg class="a" style="left:1px;top:1px" width="11" height="11" viewBox="0 0 11 11"><path d="M1.5 5.5 L4.3 8.8 L9.6 1.6" fill="none" stroke="#111" stroke-width="1.9"/></svg></div>
<div class="ty" style="left:334px;top:408.5px;font-style:italic;font-size:11.5px;letter-spacing:-0.2px;color:#adadad">Aa</div>
<div class="sn" style="top:409px;color:#4c5474;letter-spacing:-0.12px">Occupation</div>
<div class="dd" style="left:491px;top:406px;letter-spacing:-0.12px">Occupation</div>
<div class="dd" style="left:656px;top:406px">None</div>
<div class="tx" style="left:821px;top:406px"></div>
<div class="dd" style="left:986px;top:406px">None</div>
<div class="tx" style="left:1481px;top:406px"></div>
<div class="sr" style="top:429px;background:#ffffff;height:26px"></div>
<div class="cb" style="left:305px;top:435px"><svg class="a" style="left:1px;top:1px" width="11" height="11" viewBox="0 0 11 11"><path d="M1.5 5.5 L4.3 8.8 L9.6 1.6" fill="none" stroke="#111" stroke-width="1.9"/></svg></div>
<div class="ty" style="left:334px;top:434.5px;font-style:italic;font-size:11.5px;letter-spacing:-0.2px;color:#adadad">Aa</div>
<div class="sn" style="top:435px;color:#4c5474;letter-spacing:-0.12px">Home Owner</div>
<div class="dd" style="left:491px;top:432px;letter-spacing:-0.12px">Home Owner</div>
<div class="dd" style="left:656px;top:432px">None</div>
<div class="tx" style="left:821px;top:432px"></div>
<div class="dd" style="left:986px;top:432px">None</div>
<div class="tx" style="left:1481px;top:432px"></div>
<div class="sr" style="top:455px;background:#f2f3f5;height:26px"></div>
<div class="cb" style="left:305px;top:461px;background:#f6f6f6"></div>
<div class="ty" style="left:336.8px;top:459.5px;font-size:14px;color:#a2a2a2">#</div>
<div class="sn" style="top:461px;color:#adb1be;letter-spacing:-0.12px">Cars</div>
<div class="dd" style="left:491px;top:458px;letter-spacing:-0.12px">Cars</div>
<div class="dd" style="left:656px;top:458px">None</div>
<div class="dd" style="left:986px;top:458px;padding-left:36px"><span class="a" style="left:13.8px;top:-2.9px;color:#e3a562;font-size:18px;line-height:22px;transform:scaleX(0.9);transform-origin:0 0;font-family:'Liberation Serif',serif">&#931;</span>Sum</div>
<div class="tx" style="left:1151px;top:458px">customerProfile</div>
<div class="dd fm" style="left:1316px;top:458px;padding-left:6px;border-color:#5a5a5a;letter-spacing:-0.1px">#,###.00</div>
<div class="tx" style="left:1481px;top:458px"></div>
<div class="sr" style="top:481px;background:#ffffff;height:26px"></div>
<div class="cb" style="left:305px;top:487px"><svg class="a" style="left:1px;top:1px" width="11" height="11" viewBox="0 0 11 11"><path d="M1.5 5.5 L4.3 8.8 L9.6 1.6" fill="none" stroke="#111" stroke-width="1.9"/></svg></div>
<div class="ty" style="left:334px;top:486.5px;font-style:italic;font-size:11.5px;letter-spacing:-0.2px;color:#adadad">Aa</div>
<div class="sn" style="top:487px;color:#4c5474;letter-spacing:-0.08px">Commute Distance</div>
<div class="dd" style="left:491px;top:484px;letter-spacing:-0.08px">Commute Distance</div>
<div class="dd" style="left:656px;top:484px">None</div>
<div class="tx" style="left:821px;top:484px"></div>
<div class="dd" style="left:986px;top:484px">None</div>
<div class="tx" style="left:1481px;top:484px"></div>
<div class="sr" style="top:507px;background:#f2f3f5;height:26px"></div>
<div class="cb" style="left:305px;top:513px;background:#f6f6f6"></div>
<div class="ty" style="left:336.8px;top:511.5px;font-size:14px;color:#a2a2a2">#</div>
<div class="sn" style="top:513px;color:#adb1be;letter-spacing:-0.12px">Age</div>
<div class="dd" style="left:491px;top:510px;letter-spacing:-0.12px">Age</div>
<div class="dd" style="left:656px;top:510px">None</div>
<div class="dd" style="left:986px;top:510px;padding-left:36px"><span class="a" style="left:13.8px;top:-2.9px;color:#e3a562;font-size:18px;line-height:22px;transform:scaleX(0.9);transform-origin:0 0;font-family:'Liberation Serif',serif">&#931;</span>Sum</div>
<div class="tx" style="left:1151px;top:510px">customerProfile</div>
<div class="dd fm" style="left:1316px;top:510px;padding-left:6px;border-color:#5a5a5a;letter-spacing:-0.1px">#,###.00</div>
<div class="tx" style="left:1481px;top:510px"></div>
<div class="sr" style="top:533px;background:#ffffff;height:25px"></div>
<div class="cb" style="left:305px;top:539px"><svg class="a" style="left:1px;top:1px" width="11" height="11" viewBox="0 0 11 11"><path d="M1.5 5.5 L4.3 8.8 L9.6 1.6" fill="none" stroke="#111" stroke-width="1.9"/></svg></div>
<div class="ty" style="left:334px;top:538.5px;font-style:italic;font-size:11.5px;letter-spacing:-0.2px;color:#adadad">Aa</div>
<div class="sn" style="top:539px;color:#4c5474;letter-spacing:-0.35px">Purchased Bike</div>
<div class="dd" style="left:491px;top:536px;letter-spacing:-0.35px">Purchased Bike</div>
<div class="dd" style="left:656px;top:536px">None</div>
<div class="tx" style="left:821px;top:536px"></div>
<div class="dd" style="left:986px;top:536px">None</div>
<div class="tx" style="left:1481px;top:536px"></div>
<div class="a" style="left:325px;top:247px;width:1px;height:312px;background:#d9d9d9"></div>
<div class="a" style="left:1660px;top:94px;width:30px;height:740px;background:#474747"></div>
<div class="d" style="left:1660px;top:184px;width:30px;height:3px"></div>
<div class="d" style="left:1660px;top:287px;width:30px;height:3px"></div>
<svg class="a" style="left:1669px;top:104px" width="9" height="12" viewBox="0 0 9 12"><path d="M7.3 1 L1.9 6 L7.3 11" fill="none" stroke="#dcdcdc" stroke-width="1"/></svg>
<svg class="a" style="left:1669px;top:198px" width="9" height="12" viewBox="0 0 9 12"><path d="M7.3 1 L1.9 6 L7.3 11" fill="none" stroke="#dcdcdc" stroke-width="1"/></svg>
<svg class="a" style="left:1669px;top:302px" width="9" height="12" viewBox="0 0 9 12"><path d="M7.3 1 L1.9 6 L7.3 11" fill="none" stroke="#dcdcdc" stroke-width="1"/></svg>
<div class="vt" style="top:123.5px;height:48px;letter-spacing:-0.78px">Progress</div>
<div class="vt" style="top:217.3px;height:58px;letter-spacing:-0.37px">Properties</div>
<div class="vt" style="top:320px;height:50px;letter-spacing:-0.54px">Schedule</div>
<div class="a" style="left:0;top:832px;width:1690px;height:3px;background:#232323"></div>
<div class="a" style="left:0;top:835px;width:1690px;height:37px;background:#141414"></div>
<svg class="a" style="left:0;top:832px" width="1690" height="40" viewBox="0 0 1690 40">
<path d="M101.8 4.5 V29 Q101.8 34.2 107 34.2 H182 Q187.3 34.2 187.3 29 V4.5 Z" fill="#232323"/>
<path d="M0 4.5 H99.3 Q101.8 4.5 101.8 7 V29.5 Q101.8 34.2 106.5 34.2 H182.6 Q187.3 34.2 187.3 29.5 V7 Q187.3 4.5 189.8 4.5 H1690" fill="none" stroke="#fbc02d" stroke-width="3"/>
<path d="M0 33.5 Q0.5 39.5 7 40 H0 Z" fill="#b4b4b4"/><path d="M1690 33.5 Q1689.5 39.5 1683 40 H1690 Z" fill="#b4b4b4"/>
</svg>
<svg class="a" style="left:13px;top:848px" width="15" height="12" viewBox="0 0 15 12"><path d="M0.9 2 H14 M0.9 6 H14 M0.9 10 H14" stroke="#e8e8e8" stroke-width="2" fill="none"/></svg>
<svg class="a" style="left:46px;top:845px" width="19" height="18" viewBox="0 0 19 18"><path d="M1 0.9 H7.6 L9.6 2.9 H1 Z M1 3.7 H16.2 V14.1 H1 Z" fill="#d4d4d4"/><circle cx="12" cy="10.7" r="4.7" fill="#141414" stroke="#e0e0e0" stroke-width="1.2"/><path d="M8.9 14.5 L6.4 16.8" stroke="#e0e0e0" stroke-width="1.2"/></svg>
<svg class="a" style="left:76px;top:846px" width="19" height="17" viewBox="0 0 19 17"><path d="M1.3 1.5 H9.3 L6.5 5 V9.5 H4.3 V5 Z" fill="none" stroke="#e4e4e4" stroke-width="1" stroke-linejoin="round"/><path d="M12.3 1.5 H16.5 V11.5 H6.5 V14.5 H1.5 V6.9" fill="none" stroke="#e4e4e4" stroke-width="1.1"/><path d="M8.1 14.1 H11.8 M13.2 14.1 H17" stroke="#e4e4e4" stroke-width="1.9"/></svg>
<svg class="a" style="left:119px;top:846px" width="12" height="12" viewBox="0 0 12 12"><g fill="#f7c22c"><ellipse cx="5.5" cy="3.3" rx="4.7" ry="2.3"/><rect x="0.8" y="3.3" width="9.4" height="4.8"/><ellipse cx="5.5" cy="8.1" rx="4.7" ry="2.3"/></g><path d="M0.6 4 A4.9 2.3 0 0 0 10.4 4 M0.6 6.4 A4.9 2.3 0 0 0 10.4 6.4" fill="none" stroke="#232323" stroke-width="1"/></svg>
<div class="a" style="left:135px;top:841px;width:18px;height:17px;background:#48433e"></div>
<div class="a" style="left:153px;top:841px;width:11px;height:17px;background:#403f4a"></div>
<svg class="a" style="left:171px;top:849px" width="11" height="7" viewBox="0 0 11 7"><path d="M0.2 0 H10.2 L5.2 6 Z" fill="#f4f4f4"/></svg>
<svg class="a" style="left:202px;top:847px" width="14" height="14" viewBox="0 0 14 14"><path d="M7 1 V13 M1 7 H13" stroke="#f0f0f0" stroke-width="1.9" fill="none"/></svg>
<svg class="a" style="left:1575px;top:845px" width="24" height="18" viewBox="0 0 24 18"><path d="M11.6 3.5 L13 4.6" stroke="#505050" stroke-width="0.9" fill="none"/><path d="M10.2 5.4 L13 7.6" stroke="#505050" stroke-width="0.9" fill="none"/><path d="M8.8 7.4 L13 10.7" stroke="#505050" stroke-width="0.9" fill="none"/><path d="M7.4 9.3 L13 13.7" stroke="#505050" stroke-width="0.9" fill="none"/><path d="M6.0 11.3 L13 16.8" stroke="#505050" stroke-width="0.9" fill="none"/><path d="M14.3 1.5 V16.8 L21.8 11.3 Z M16.2 6.2 V13.6 L19.8 11 Z" fill="none" stroke="#505050" stroke-width="0.9"/></svg>
<div class="a" style="left:1607px;top:845.5px;width:16px;height:16px;border-radius:8px;background:#fb2b1c;color:#fff;font-size:11px;line-height:16.5px;text-align:center">3</div>
<svg class="a" style="left:1624px;top:845px" width="18" height="18" viewBox="0 0 18 18"><path d="M5.4 1.6 L1.2 6.2 L4.6 8 L6.4 14.8 L14.8 8.8 L9.4 6.6 L7.4 3 Z" fill="none" stroke="#e6e6e6" stroke-width="1.1" stroke-linejoin="round"/><path d="M10.9 12 L16 16.9" stroke="#e6e6e6" stroke-width="1.1"/></svg>
<svg class="a" style="left:1648px;top:852px" width="8" height="6" viewBox="0 0 8 6"><path d="M0.6 0 H7.4 L4 5.2 Z" fill="#d4dbe8"/></svg>
<svg class="a" style="left:1664px;top:844px" width="19" height="20" viewBox="0 0 19 20"><path d="M12 1.9 A8.3 8.3 0 1 0 10.8 18.2" fill="none" stroke="#e6e6e6" stroke-width="1.2"/><path d="M16 9 A5 5 0 1 0 10.4 15.2" fill="none" stroke="#e6e6e6" stroke-width="1.2"/><path d="M11 7.6 L12 9.4" stroke="#e6e6e6" stroke-width="1"/><rect x="10.7" y="11.8" width="6.6" height="6.4" fill="#0fd02a"/></svg>
<div class="a" style="left:260px;top:208px;width:230px;height:367px;border:3px solid #cf72a8;box-shadow:2px 3px 4px rgba(0,0,0,0.36), inset 2px 3px 4px rgba(0,0,0,0.30)"></div>
<svg class="a" style="left:215px;top:140px;overflow:visible" width="100" height="100" viewBox="215 140 100 100">
<defs><filter id="sh" x="-30%" y="-30%" width="160%" height="160%"><feGaussianBlur stdDeviation="1.7"/></filter></defs>
<g transform="translate(2.5,3)" opacity="0.55" filter="url(#sh)"><path d="M230.7 151.2 L280 211.8" stroke="#000" stroke-width="4.9" stroke-linecap="round" fill="none"/><path d="M289 222.9 L269.2 213.4 L271.3 209.7 L277 212.4 L281 208.6 L279.5 202.5 L283.9 201.6 Z" fill="#000"/></g>
<path d="M230.7 151.2 L280 211.8" stroke="#e9a200" stroke-width="4.9" stroke-linecap="round" fill="none"/><path d="M289 222.9 L269.2 213.4 L271.3 209.7 L277 212.4 L281 208.6 L279.5 202.5 L283.9 201.6 Z" fill="#e9a200"/>
</svg>
<svg class="a" style="left:285px;top:231px" width="21" height="27" viewBox="0 0 21 27">
<path d="M6.6 16.8 V3.8 Q6.6 2.2 8 2.2 Q9.4 2.2 9.4 3.8 V8.4 Q9.6 7.4 10.9 7.5 Q12.3 7.6 12.3 9 Q12.5 8.3 13.8 8.4 Q15.3 8.5 15.3 10 Q15.5 9.2 16.8 9.3 Q18.2 9.4 18.2 11 V17 Q18.2 25.4 11.5 25.4 Q8 25.4 5.6 21.6 L1.9 16.6 Q1 15.2 2.2 14.4 Q3.4 13.8 4.4 14.8 Z" fill="#fff" stroke="#151a30" stroke-width="1.3" stroke-linejoin="round"/>
<path d="M9.4 8.4 V11.4 M12.3 9 V11.6 M15.3 10 V11.8" fill="none" stroke="#151a30" stroke-width="1.3" stroke-linecap="round"/>
</svg>
</body></html>
